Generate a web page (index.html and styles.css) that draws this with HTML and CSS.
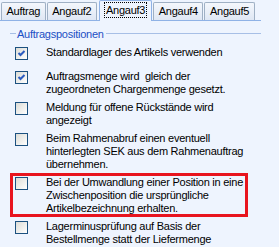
FILE: index.html
```html
<!DOCTYPE html>
<html lang="de">
<head>
  <meta charset="UTF-8" />
  <title>Angauf3</title>
  <link rel="stylesheet" href="styles.css">
</head>
<body>

  <div class="dialog">
    <div class="tabs">
      <div class="tab">Auftrag</div>
      <div class="tab">Angauf2</div>
      <div class="tab active"><span class="focus">Angauf3</span></div>
      <div class="tab">Angauf4</div>
      <div class="tab">Angauf5</div>
    </div>

    <div class="panel">
      <div class="legend"><span>Auftragspositionen</span></div>

      <div class="rows">
        <div class="row first">
          <span class="box checked"><svg width="11" height="11" viewBox="0 0 11 11"><path d="M2.5 5 L4.5 7 L8.5 3" fill="none" stroke="#2c5cc0" stroke-width="2"/></svg></span>
          <span class="label">Standardlager des Artikels verwenden</span>
        </div>
        <div class="row">
          <span class="box checked"><svg width="11" height="11" viewBox="0 0 11 11"><path d="M2.5 5 L4.5 7 L8.5 3" fill="none" stroke="#2c5cc0" stroke-width="2"/></svg></span>
          <span class="label">Auftragsmenge wird &nbsp;gleich der<br>zugeordneten Chargenmenge gesetzt.</span>
        </div>
        <div class="row">
          <span class="box"></span>
          <span class="label">Meldung für offene Rückstände wird<br>angezeigt</span>
        </div>
        <div class="row">
          <span class="box"></span>
          <span class="label">Beim Rahmenabruf einen eventuell<br>hinterlegten SEK aus dem Rahmenauftrag<br>übernehmen.</span>
        </div>
        <div class="row marked">
          <span class="box"></span>
          <span class="label">Bei der Umwandlung einer Position in eine<br>Zwischenposition die ursprüngliche<br>Artikelbezeichnung erhalten.</span>
        </div>
        <div class="row">
          <span class="box"></span>
          <span class="label">Lagerminusprüfung auf Basis der<br>Bestellmenge statt der Liefermenge</span>
        </div>
      </div>
    </div>
  </div>

</body>
</html>
```

FILE: styles.css
```css
html, body {
  margin: 0;
  padding: 0;
  overflow: hidden;
}

body {
  background-color: #eef4fe;
  color: #000;
  font-family: "Liberation Sans", Arial, sans-serif;
  font-size: 11px;
  letter-spacing: -0.25px;
}

.dialog {
  width: 261px;
}

.tabs {
  display: flex;
  align-items: flex-end;
  height: 20px;
  padding-left: 1px;
  border-bottom: 1px solid #8fb2e6;
}

.tab {
  height: 17px;
  line-height: 17px;
  padding: 0 4.5px;
  margin-right: 1px;
  border: 1px solid #9fb0c4;
  border-bottom: none;
  border-radius: 2px 2px 0 0;
  background: linear-gradient(#f4f7fc, #dfe7f4);
}

.tab.active {
  position: relative;
  height: 20px;
  line-height: 19px;
  margin: 0 1px -1px 1px;
  padding: 0 5px;
  background: #eef4fe;
  border-color: #8fb2e6;
}

.focus {
  display: inline-block;
  line-height: 14px;
  padding: 0 1px;
  outline: 1px dotted #000;
}

.legend {
  display: flex;
  align-items: center;
  height: 13px;
  margin: 6px 0 0 10px;
  color: #1c4fc4;
}

.legend::before {
  content: "";
  width: 6px;
  border-top: 1px solid #a7bfe6;
  margin-right: 1px;
}

.legend::after {
  content: "";
  flex: 1;
  border-top: 1px solid #a7bfe6;
  margin-left: 2px;
}

.rows {
  display: flex;
  flex-direction: column;
  gap: 5px;
  margin: 6px 0 0 15px;
}

.row {
  display: flex;
  align-items: flex-start;
  width: 230px;
}

.row.first {
  margin-bottom: 5px;
}

.box {
  flex: none;
  width: 11px;
  height: 11px;
  margin-top: 1px;
  border: 1px solid #1c5180;
  background: linear-gradient(135deg, #dcdcd6, #ffffff);
}

.box svg {
  display: block;
}

.label {
  margin-left: 18px;
  line-height: 13px;
  white-space: nowrap;
}

.marked {
  position: relative;
}

.marked::after {
  content: "";
  position: absolute;
  left: -5px;
  right: -3px;
  top: -3px;
  bottom: -2px;
  border: 3px solid #e8141e;
}
```
